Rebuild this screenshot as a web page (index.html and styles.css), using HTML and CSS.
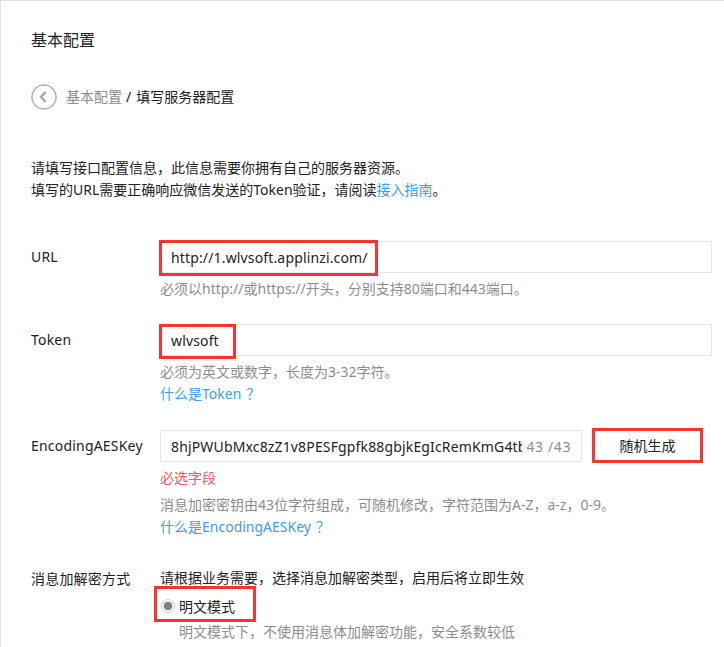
FILE: index.html
```html
<!DOCTYPE html>
<html lang="zh">
<head>
<meta charset="utf-8">
<title>基本配置</title>
<link rel="stylesheet" href="styles.css">
</head>
<body>
<main class="page">
  <h1 class="title">基本配置</h1>
  <nav class="crumb">
    <svg class="back" width="28" height="28" viewBox="0 0 28 28" fill="none">
      <circle cx="14" cy="14" r="12" stroke="#b4b4b4" stroke-width="1.6"/>
      <path d="M15.6 9.2 11 14l4.6 4.8" stroke="#a8a8a8" stroke-width="2.4"/>
    </svg>
    <span class="crumb-parent">基本配置</span>
    <span class="crumb-sep">/</span>
    <span class="crumb-current">填写服务器配置</span>
  </nav>
  <p class="intro">请填写接口配置信息，此信息需要你拥有自己的服务器资源。<br>填写的URL需要正确响应微信发送的Token验证，请阅读<a class="link-strong" href="#">接入指南</a>。</p>

  <div class="row row-url">
    <div class="label">URL</div>
    <div class="field">
      <div class="input"><span class="value">http://1.wlvsoft.applinzi.com/</span><i class="mark mark-url"></i></div>
      <div class="hint">必须以http://或https://开头，分别支持80端口和443端口。</div>
    </div>
  </div>

  <div class="row row-token">
    <div class="label">Token</div>
    <div class="field">
      <div class="input"><span class="value">wlvsoft</span><i class="mark mark-token"></i></div>
      <div class="hint">必须为英文或数字，长度为3-32字符。</div>
      <a class="link" href="#">什么是Token<span class="q">？</span></a>
    </div>
  </div>

  <div class="row row-key">
    <div class="label">EncodingAESKey</div>
    <div class="field">
      <div class="key-line">
        <div class="input input-key"><span class="value value-key">8hjPWUbMxc8zZ1v8PESFgpfk88gbjkEgIcRemKmG4tb</span><span class="count">43 /43</span></div>
        <div class="btn">随机生成<i class="mark mark-btn"></i></div>
      </div>
      <div class="error">必选字段</div>
      <div class="hint hint-key">消息加密密钥由43位字符组成，可随机修改，字符范围为A-Z，a-z，0-9。</div>
      <a class="link" href="#">什么是EncodingAESKey<span class="q">？</span></a>
    </div>
  </div>

  <div class="row row-mode">
    <div class="label">消息加解密方式</div>
    <div class="field">
      <div class="lead">请根据业务需要，选择消息加解密类型，启用后将立即生效</div>
      <div class="radio-line">
        <span class="radio"></span><span class="radio-text">明文模式</span><i class="mark mark-radio"></i>
      </div>
      <div class="hint hint-radio">明文模式下，不使用消息体加解密功能，安全系数较低</div>
    </div>
  </div>
</main>
</body>
</html>
```

FILE: styles.css
```css
* { box-sizing: border-box; }
html, body { margin: 0; height: 647px; overflow: hidden; background: #fff; }
body {
  font-family: "Noto Sans", "Noto Sans CJK SC", sans-serif;
  font-size: 14px;
  color: #222;
}
.page {
  height: 647px;
  overflow: hidden;
  border-top: 1px solid #e2e2e2;
  border-left: 1px solid #e2e2e2;
  padding: 27px 12px 0 30px;
}
.title { margin: 0; font-size: 16px; font-weight: 400; line-height: 24px; color: #222; }
.crumb { display: flex; align-items: center; margin-top: 31px; height: 28px; margin-left: -1px; line-height: 24px; }
.back { flex: none; margin-right: 8px; }
.crumb-parent { color: #8d8d8d; }
.crumb-sep { margin: 0 5px 0 4px; }
.intro { margin: 46px 0 0; line-height: 22px; }
.link-strong { color: #459ae9; text-decoration: none; }
.row { display: flex; }
.row-url { margin-top: 40px; }
.row-token { margin-top: 24px; }
.row-key { margin-top: 25px; }
.row-mode { margin-top: 25px; }
.label { width: 129px; flex: none; line-height: 32px; font-size: 14px; letter-spacing: 0.2px; }
.field { flex: 1; min-width: 0; }
.input {
  position: relative;
  display: flex;
  height: 32px;
  border: 1px solid #e7e7eb;
  padding: 0 10px;
  align-items: center;
  font-size: 14px;
}
.value { white-space: nowrap; letter-spacing: 0.15px; }
.hint { color: #8d8d8d; line-height: 22px; margin-top: 5px; }
.link { display: block; color: #459ae9; line-height: 22px; text-decoration: none; }
.q { margin-left: 5px; }
.key-line { display: flex; align-items: center; }
.input-key { width: 422px; flex: none; }
.value-key { flex: 1; overflow: hidden; min-width: 0; }
.count { color: #8d8d8d; margin-left: 5px; white-space: nowrap; letter-spacing: 0.6px; }
.btn {
  position: relative;
  width: 105px;
  height: 32px;
  margin-left: 13px;
  line-height: 32px;
  text-align: center;
}
.error { color: #e15f63; line-height: 22px; margin-top: 5px; }
.hint-key { margin-top: 5px; }
.lead { line-height: 22px; margin-top: 4px; }
.radio-line { position: relative; display: flex; align-items: center; height: 22px; margin-top: 6px; }
.radio {
  width: 14px; height: 14px; border: 1px solid #cfcfcf; border-radius: 50%;
  background: radial-gradient(circle, #808080 0 4px, #fff 4.6px);
  margin-left: 1px;
  margin-right: 4px;
}
.hint-radio { margin: 4px 0 0 19px; }
.mark { position: absolute; border: 3px solid #f93434; pointer-events: none; }
.mark-url { left: -2px; top: -2px; width: 219px; height: 36px; }
.mark-token { left: -2px; top: -1px; width: 77px; height: 35px; }
.mark-btn { left: -3px; top: -2px; width: 111px; height: 35px; }
.mark-radio { left: -6px; top: -9px; width: 102px; height: 36px; }
```
